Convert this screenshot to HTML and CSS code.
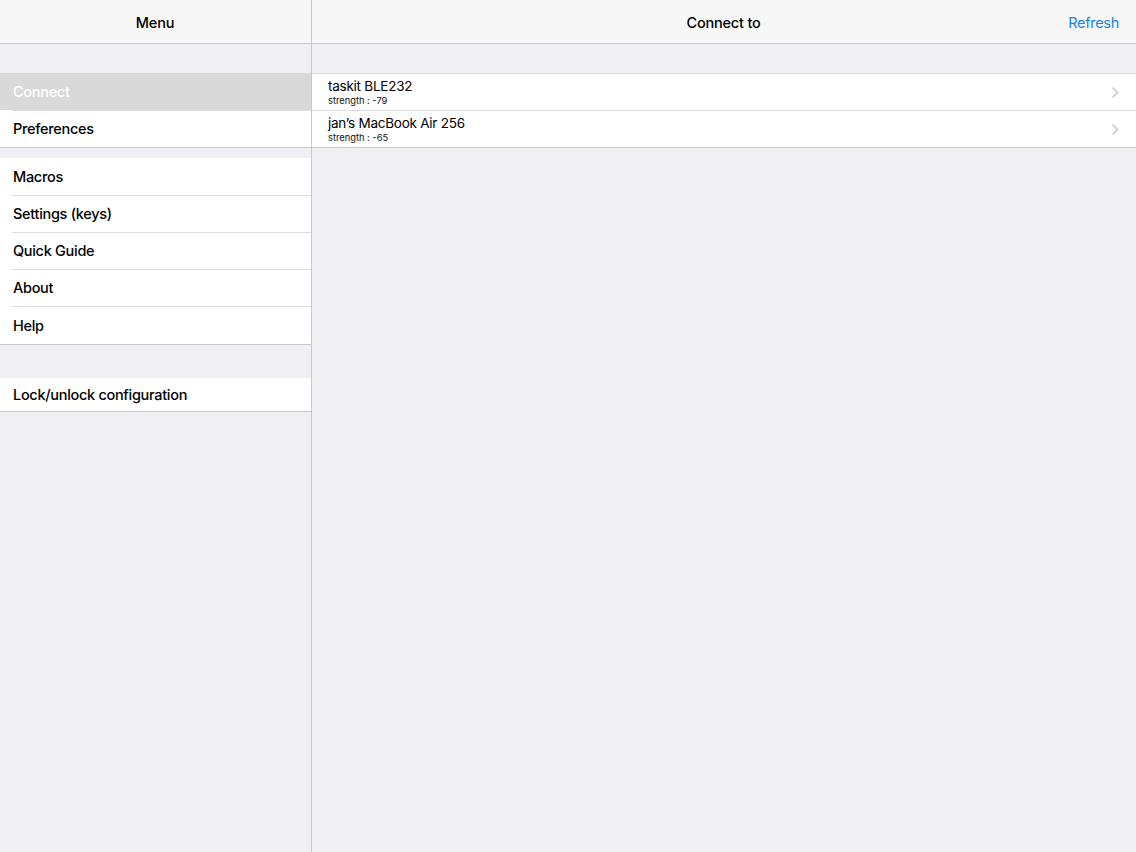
FILE: index.html
```html
<!DOCTYPE html>
<html>
<head>
<meta charset="utf-8">
<link rel="stylesheet" href="styles.css">
</head>
<body>
<div class="app">
  <aside class="sidebar">
    <header class="nav"><span class="nav-title">Menu</span></header>
    <div class="gap gap-top"></div>
    <ul class="group">
      <li class="item selected">Connect</li>
      <li class="item">Preferences</li>
    </ul>
    <div class="gap gap-small"></div>
    <ul class="group group-tall">
      <li class="item">Macros</li>
      <li class="item">Settings (keys)</li>
      <li class="item">Quick Guide</li>
      <li class="item">About</li>
      <li class="item">Help</li>
    </ul>
    <div class="gap gap-large"></div>
    <ul class="group">
      <li class="item item-short">Lock/unlock configuration</li>
    </ul>
  </aside>
  <main class="detail">
    <header class="nav">
      <span class="nav-side"></span>
      <span class="nav-title">Connect to</span>
      <span class="nav-side nav-action">Refresh</span>
    </header>
    <div class="gap gap-top"></div>
    <ul class="group devices">
      <li class="device">
        <div class="device-text">
          <span class="device-name">taskit BLE232</span>
          <span class="device-sub">strength : -79</span>
        </div>
        <svg class="chev" width="8" height="13" viewBox="0 0 8 13"><path d="M1.5 1.5 L6.5 6.5 L1.5 11.5" fill="none" stroke="#c7c7cc" stroke-width="1.5"/></svg>
      </li>
      <li class="device">
        <div class="device-text">
          <span class="device-name">jan’s MacBook Air 256</span>
          <span class="device-sub">strength : -65</span>
        </div>
        <svg class="chev" width="8" height="13" viewBox="0 0 8 13"><path d="M1.5 1.5 L6.5 6.5 L1.5 11.5" fill="none" stroke="#c7c7cc" stroke-width="1.5"/></svg>
      </li>
    </ul>
  </main>
</div>
</body>
</html>
```
FILE: styles.css
```css
* { box-sizing: border-box; }
html, body { margin: 0; padding: 0; height: 100%; }
body {
  font-family: Inter, "Liberation Sans", sans-serif;
  background: #efeff4;
  color: #000;
}
.app {
  display: flex;
  height: 852px;
}
.sidebar {
  width: 312px;
  flex: none;
  border-right: 1px solid #c8c7cc;
  background: #efeff4;
}
.detail {
  flex: 1;
  background: #efeff4;
}
.nav {
  height: 44px;
  background: #f7f7f7;
  border-bottom: 1px solid #c8c7cc;
  display: flex;
  align-items: center;
  justify-content: center;
  padding: 1px 17px 0 16px;
}
.detail .nav { justify-content: space-between; }
.nav-title {
  font-size: 14.5px;
  font-weight: 500;
  letter-spacing: -0.2px;
}
.nav-side { width: 60px; }
.nav-action {
  color: #1a82e2;
  font-size: 14.5px;
  text-align: right;
  letter-spacing: -0.3px;
}
.gap-top { height: 29px; }
.gap-small { height: 10px; }
.gap-large { height: 33px; }
.group {
  list-style: none;
  margin: 0;
  padding: 0;
  background: #fff;
  border-bottom: 1px solid #c8c7cc;
}
.item {
  height: 37px;
  display: flex;
  align-items: center;
  padding-left: 13px;
  font-size: 14.5px;
  font-weight: 500;
  letter-spacing: -0.3px;
  position: relative;
}
.group-tall .item:last-child { height: 38px; }
.item.item-short { height: 33px; }
.item + .item::before {
  content: "";
  position: absolute;
  top: 0;
  left: 12px;
  right: 0;
  border-top: 1px solid #dedee2;
}
.item.selected {
  background: #d9d9d9;
  color: #fff;
}
.devices { border-top: 1px solid #dcdce0; }
.device {
  height: 36px;
  display: flex;
  align-items: center;
  justify-content: space-between;
  padding: 0 17px 0 16px;
}
.device + .device { border-top: 1px solid #dcdce0; height: 37px; }
.device-text {
  display: flex;
  flex-direction: column;
  padding-top: 1px;
}
.device-name {
  font-size: 13.5px;
  line-height: 15px;
  letter-spacing: -0.25px;
}
.device-sub {
  font-size: 9.3px;
  line-height: 12px;
  margin-top: 1px;
  color: #111;
}
.chev { flex: none; }
```
